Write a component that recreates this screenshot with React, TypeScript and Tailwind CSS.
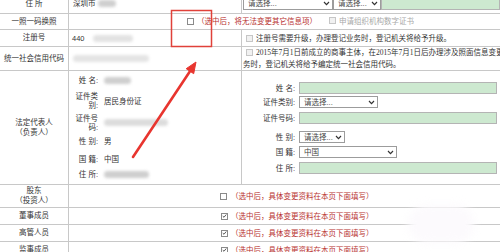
import type { ReactNode } from "react";

const line = "border-[#c8c8c8]";
const red = "text-[#b8322f]";

function Box({ checked = false, muted = false }: { checked?: boolean; muted?: boolean }) {
  return (
    <span
      className={`inline-flex h-[7px] w-[7px] shrink-0 items-center justify-center border ${
        muted ? "border-[#c6c6c6] bg-[#f1f1f1]" : "border-[#8a8a8a] bg-white"
      }`}
    >
      {checked && (
        <svg viewBox="0 0 8 8" className="h-[6px] w-[6px]">
          <path d="M1.2 4.2 L3.2 6 L6.8 1.6" fill="none" stroke="#333" strokeWidth="1.3" />
        </svg>
      )}
    </span>
  );
}

function Smudge({ className = "" }: { className?: string }) {
  return <span className={`inline-block h-[7px] rounded-sm bg-[#cfcfcf] blur-[1.5px] ${className}`} />;
}

function Pick({ label, className = "" }: { label: string; className?: string }) {
  return (
    <div className={`flex h-[12px] shrink-0 items-center justify-between border border-[#9c9c9c] bg-white pl-[4px] pr-[2px] ${className}`}>
      <span className="text-[#444]">{label}</span>
      <svg viewBox="0 0 8 6" className="h-[5px] w-[7px]">
        <path d="M1 1.2 L4 4.4 L7 1.2" fill="none" stroke="#333" strokeWidth="1.4" />
      </svg>
    </div>
  );
}

function Field() {
  return <div className="h-[12px] w-[198px] border border-[#b4b4b4] bg-[#cde9d0]" />;
}

function Row({ label, h, children }: { label: ReactNode; h: string; children: ReactNode }) {
  return (
    <div className={`flex border-b ${line} ${h}`}>
      <div className={`flex w-[69px] shrink-0 flex-col items-center justify-center border-r ${line} text-center leading-[10px]`}>
        {label}
      </div>
      <div className="flex min-w-0 flex-1">{children}</div>
    </div>
  );
}

function LeftItem({ h, label, children }: { h: string; label: ReactNode; children?: ReactNode }) {
  return (
    <div className={`flex items-center ${h}`}>
      <div className="w-[30px] shrink-0 pr-[1px] text-right leading-[9px]">{label}</div>
      <div className="ml-[5px] flex items-center">{children}</div>
    </div>
  );
}

function RightItem({ gap, label, children }: { gap: string; label: string; children: ReactNode }) {
  return (
    <div className={`flex h-[14px] items-center ${gap}`}>
      <div className="w-[53px] shrink-0 text-right">{label}</div>
      <div className="ml-[4px] flex items-center">{children}</div>
    </div>
  );
}

const note = "（选中后，具体变更资料在本页下面填写）";
const mid = "flex w-[172px] shrink-0";

export default function App() {
  return (
    <div className="relative h-[252px] w-[500px] overflow-hidden bg-white font-['Liberation_Sans','Noto_Sans_CJK_SC',sans-serif] text-[7.5px] leading-[9px] text-[#333]">
      <div className="-mt-[6px] flex flex-col">
        <Row label="住 所" h="h-[20px]">
          <div className={`${mid} items-center pl-[4px]`}>
            <span>深圳市</span>
            <Smudge className="ml-[2px] w-[18px]" />
          </div>
          <div className={`flex min-w-0 flex-1 items-center border-l ${line} pl-[1px]`}>
            <Pick label="请选择..." className="w-[90px]" />
            <Pick label="请选择..." className="w-[48px]" />
            <div className="h-[12px] flex-1 border border-[#b4b4b4] bg-[#cde9d0]" />
          </div>
        </Row>

        <Row label="一照一码换照" h="h-[16px]">
          <div className="flex flex-1 items-center pl-[118px]">
            <Box />
            <span className={`ml-[3px] ${red}`}>（选中后，将无法变更其它信息项）</span>
            <span className="ml-[12px]">
              <Box muted />
            </span>
            <span className="ml-[3px] text-[#a8a8a8]">申请组织机构数字证书</span>
          </div>
        </Row>

        <Row label="注册号" h="h-[17px]">
          <div className={`${mid} items-center pl-[3px]`}>
            <span>440</span>
            <Smudge className="ml-[8px] w-[40px] bg-[#e2e2e2]" />
          </div>
          <div className={`flex min-w-0 flex-1 items-center border-l ${line} pl-[4px]`}>
            <Box muted />
            <span className="ml-[3px] whitespace-nowrap">注册号需要升级，办理登记业务时，登记机关将给予升级。</span>
          </div>
        </Row>

        <Row label="统一社会信用代码" h="h-[24px]">
          <div className={`${mid} items-center pl-[4px]`}>
            <Smudge className="w-[76px] bg-[#e4e4e4]" />
          </div>
          <div className={`flex min-w-0 flex-1 flex-col justify-center border-l ${line} whitespace-nowrap font-['Liberation_Serif','Noto_Sans_CJK_SC',serif] leading-[11.5px]`}>
            <div className="flex items-center pl-[4px]">
              <Box muted />
              <span className="ml-[3px]">2015年7月1日前成立的商事主体，在2015年7月1日后办理涉及照面信息变更登记业</span>
            </div>
            <div className="pl-[1px]">务时，登记机关将给予编定统一社会信用代码。</div>
          </div>
        </Row>

        <Row
          label={
            <>
              <span>法定代表人</span>
              <span>（负责人）</span>
            </>
          }
          h="h-[114px]"
        >
          <div className={`${mid} flex-col pt-[1px]`}>
            <LeftItem h="h-[17px]" label="姓 名:">
              <Smudge className="w-[27px]" />
            </LeftItem>
            <LeftItem
              h="h-[24px]"
              label={
                <>
                  证件类
                  <br />
                  别:
                </>
              }
            >
              <span>居民身份证</span>
            </LeftItem>
            <LeftItem
              h="h-[19px]"
              label={
                <>
                  证件号
                  <br />
                  码:
                </>
              }
            >
              <Smudge className="w-[64px] bg-[#dcdcdc]" />
            </LeftItem>
            <LeftItem h="h-[19px]" label="性 别:">
              <span>男</span>
            </LeftItem>
            <LeftItem h="h-[16px]" label="国 籍:">
              <span>中国</span>
            </LeftItem>
            <LeftItem h="h-[15px]" label="住 所:">
              <Smudge className="w-[45px]" />
            </LeftItem>
          </div>
          <div className={`flex min-w-0 flex-1 flex-col border-l ${line} pt-[10px]`}>
            <RightItem gap="" label="姓 名:">
              <Field />
            </RightItem>
            <RightItem gap="" label="证件类别:">
              <Pick label="请选择..." className="w-[79px]" />
            </RightItem>
            <RightItem gap="mt-[2px]" label="证件号码:">
              <Field />
            </RightItem>
            <RightItem gap="mt-[5px]" label="性 别:">
              <Pick label="请选择..." className="w-[46px]" />
            </RightItem>
            <RightItem gap="mt-[1px]" label="国 籍:">
              <Pick label="中国" className="w-[98px]" />
            </RightItem>
            <RightItem gap="mt-[2px]" label="住 所:">
              <Field />
            </RightItem>
          </div>
        </Row>

        <Row
          label={
            <>
              <span>股东</span>
              <span>（投资人）</span>
            </>
          }
          h="h-[23px]"
        >
          <div className="flex flex-1 items-center pl-[151px]">
            <Box />
            <span className={`ml-[4px] ${red}`}>{note}</span>
          </div>
        </Row>

        {["董事成员", "高管人员", "监事成员"].map((name) => (
          <Row key={name} label={name} h="h-[17px]">
            <div className="flex flex-1 items-center pl-[152px]">
              <Box checked />
              <span className={`ml-[3px] ${red}`}>{note}</span>
            </div>
          </Row>
        ))}
      </div>

      <div className="pointer-events-none absolute left-[408px] top-[205px] h-[38px] w-[66px] rounded-full bg-[#fcfafd] blur-[4px]" />

      <svg className="pointer-events-none absolute left-0 top-0" width="500" height="252" viewBox="0 0 500 252">
        <rect x="171.5" y="10.5" width="40" height="36" fill="none" stroke="#e0413a" strokeWidth="1.5" />
        <line x1="133" y1="157" x2="190.5" y2="70.5" stroke="#e8352f" strokeWidth="2.6" strokeLinecap="round" />
        <polygon points="196,62 193.7,73.7 186.2,68.7" fill="#e8352f" stroke="#e8352f" strokeWidth="1" strokeLinejoin="round" />
      </svg>
    </div>
  );
}
